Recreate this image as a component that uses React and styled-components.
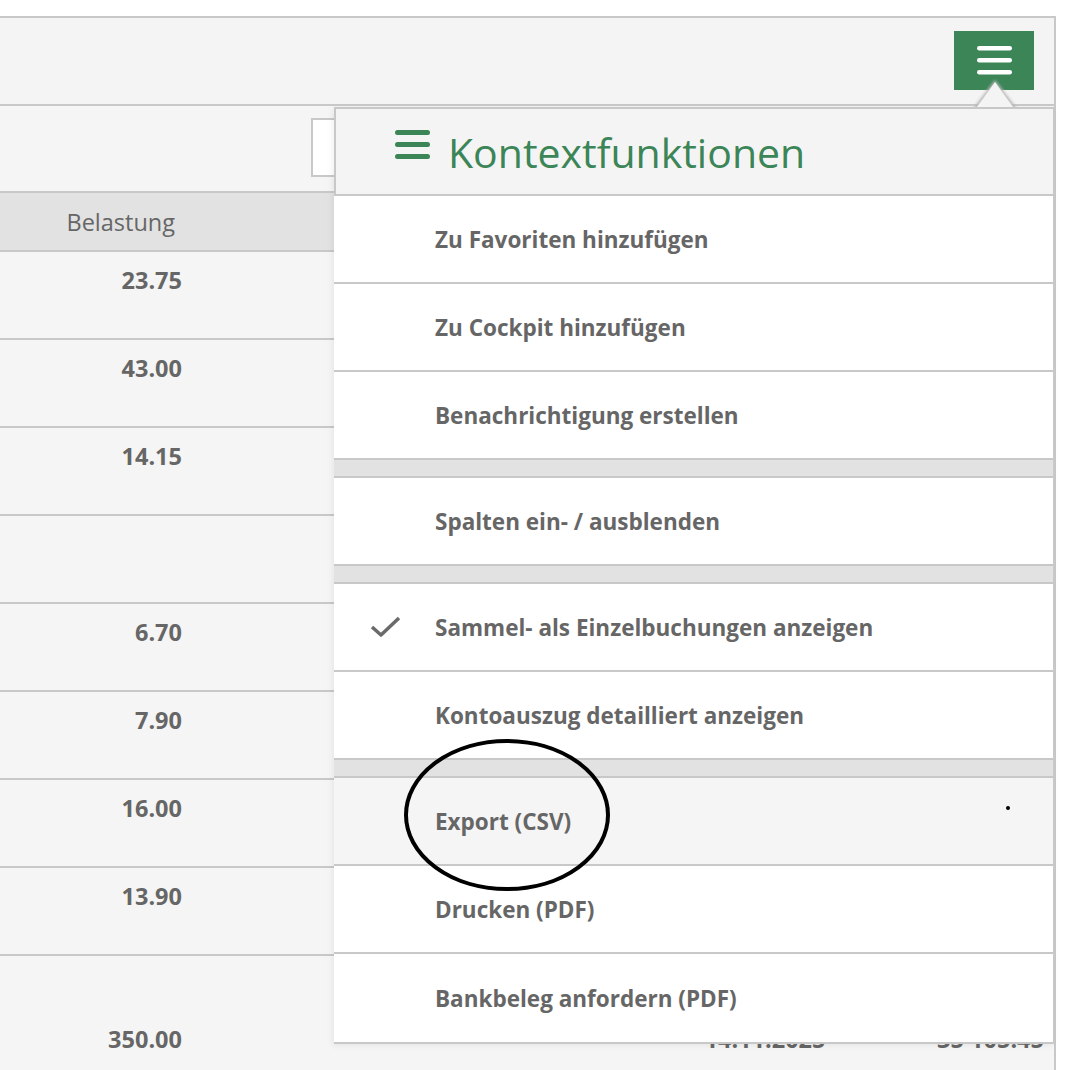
import React from "react";
import styled, { createGlobalStyle } from "styled-components";

const GlobalStyle = createGlobalStyle`
  body {
    margin: 0;
    background: #ffffff;
    font-family: "Open Sans", "Noto Sans", sans-serif;
  }
`;

const GREEN = "#3b8557";
const TEXT = "#666666";
const LINE = "#c8c8c8";

const Page = styled.div`
  position: relative;
  width: 1066px;
  height: 1070px;
  overflow: hidden;
  padding-top: 16px;
  box-sizing: border-box;
`;

const Frame = styled.div`
  width: 1056px;
  box-sizing: border-box;
  border-top: 2px solid ${LINE};
  border-right: 2px solid ${LINE};
  background: #f5f5f5;
`;

const Toolbar = styled.div`
  height: 88px;
  box-sizing: border-box;
  display: flex;
  justify-content: flex-end;
  align-items: flex-start;
  padding: 13px 20px 0 0;
  background: #f4f4f4;
  border-bottom: 2px solid ${LINE};
`;

const MenuButton = styled.button`
  width: 80px;
  height: 59px;
  border: none;
  padding: 0;
  background: ${GREEN};
  display: flex;
  align-items: center;
  justify-content: center;
`;

const FilterBar = styled.div`
  height: 87px;
  box-sizing: border-box;
  padding: 12px 0 0 311px;
  border-bottom: 2px solid ${LINE};
`;

const SearchBox = styled.div`
  width: 200px;
  height: 59px;
  box-sizing: border-box;
  background: #fff;
  border: 2px solid ${LINE};
`;

const Row = styled.div`
  display: grid;
  grid-template-columns: 200px 1fr 150px 214px;
  align-items: ${({ $head }) => ($head ? "center" : "start")};
  height: ${({ $height }) => $height || 88}px;
  box-sizing: border-box;
  padding-top: ${({ $pad }) => $pad || 0}px;
  background: ${({ $head }) => ($head ? "#e2e2e2" : "#f5f5f5")};
  border-bottom: 2px solid ${LINE};
  color: ${TEXT};
  font-size: ${({ $head }) => ($head ? 23.5 : 23.5)}px;
  font-weight: ${({ $head }) => ($head ? 400 : 700)};
  line-height: 28px;
`;

const Cell = styled.div`
  text-align: ${({ $align }) => $align || "right"};
  padding-right: ${({ $pr }) => $pr || 0}px;
`;

const Menu = styled.div`
  position: absolute;
  left: 334px;
  top: 107px;
  width: 721px;
  box-sizing: border-box;
  background: #fff;
  border-right: 2px solid ${LINE};
  border-bottom: 2px solid ${LINE};
  box-shadow: -2px 2px 6px rgba(0, 0, 0, 0.06);
`;

const Pointer = styled.svg`
  position: absolute;
  left: 634px;
  top: -31px;
`;

const MenuHead = styled.div`
  position: relative;
  height: 89px;
  box-sizing: border-box;
  display: flex;
  align-items: flex-start;
  gap: 18px;
  padding: 19px 0 0 59px;
  background: #f4f4f4;
  border: 2px solid ${LINE};
  margin-right: -2px;
`;

const Title = styled.div`
  color: ${GREEN};
  font-size: 41px;
  line-height: 48px;
`;

const Item = styled.div`
  height: 88px;
  box-sizing: border-box;
  display: flex;
  align-items: center;
  padding-left: 36px;
  background: ${({ $hover }) => ($hover ? "#f5f5f5" : "#fff")};
  border-bottom: 2px solid ${LINE};
  color: ${TEXT};
  font-size: 22.5px;
  font-weight: 700;
`;

const CheckSlot = styled.div`
  width: 65px;
  display: flex;
  align-items: center;
`;

const Separator = styled.div`
  height: 18px;
  box-sizing: border-box;
  background: #e2e2e2;
  border-bottom: 2px solid ${LINE};
`;

const Annotation = styled.svg`
  position: absolute;
  left: 0;
  top: 0;
  pointer-events: none;
`;

function Burger({ color, width, gap, thick }) {
  const h = gap * 2 + thick;
  return (
    <svg width={width} height={h} viewBox={`0 0 ${width} ${h}`}>
      {[0, 1, 2].map((i) => (
        <line
          key={i}
          x1={thick / 2}
          x2={width - thick / 2}
          y1={thick / 2 + i * gap}
          y2={thick / 2 + i * gap}
          stroke={color}
          strokeWidth={thick}
          strokeLinecap="round"
        />
      ))}
    </svg>
  );
}

const rows = [
  { value: "23.75" },
  { value: "43.00" },
  { value: "14.15" },
  { value: "" },
  { value: "6.70" },
  { value: "7.90" },
  { value: "16.00" },
  { value: "13.90" },
];

const menu = [
  { label: "Zu Favoriten hinzufügen" },
  { label: "Zu Cockpit hinzufügen" },
  { label: "Benachrichtigung erstellen" },
  { sep: true },
  { label: "Spalten ein- / ausblenden" },
  { sep: true },
  { label: "Sammel- als Einzelbuchungen anzeigen", checked: true },
  { label: "Kontoauszug detailliert anzeigen" },
  { sep: true },
  { label: "Export (CSV)", hover: true },
  { label: "Drucken (PDF)" },
  { label: "Bankbeleg anfordern (PDF)", last: true },
];

export default function App() {
  return (
    <>
      <GlobalStyle />
      <Page>
        <Frame>
          <Toolbar>
            <MenuButton>
              <Burger color="#fff" width={35} gap={12} thick={4.5} />
            </MenuButton>
          </Toolbar>
          <FilterBar>
            <SearchBox />
          </FilterBar>
          <Row $head $height={59}>
            <Cell $pr={25}>Belastung</Cell>
          </Row>
          {rows.map((r, i) => (
            <Row key={i} $pad={14}>
              <Cell $pr={18}>{r.value}</Cell>
            </Row>
          ))}
          <Row $pad={69} $height={120}>
            <Cell $pr={18}>350.00</Cell>
            <Cell />
            <Cell $align="center">14.11.2025</Cell>
            <Cell $pr={10}>35'105.45</Cell>
          </Row>
        </Frame>

        <Menu>
          <Pointer width="54" height="34" viewBox="0 0 54 34">
            <defs>
              <filter id="ps" x="-30%" y="-30%" width="160%" height="160%">
                <feGaussianBlur stdDeviation="1.6" />
              </filter>
            </defs>
            <polygon points="4,34 27,4 50,34" fill="#b8b8b8" filter="url(#ps)" />
            <polygon points="6,35 27,6 48,35" fill="#f4f4f4" />
          </Pointer>
          <MenuHead>
            <div style={{ paddingTop: 2 }}>
              <Burger color={GREEN} width={35} gap={12} thick={5} />
            </div>
            <Title>Kontextfunktionen</Title>
          </MenuHead>
          {menu.map((m, i) =>
            m.sep ? (
              <Separator key={i} />
            ) : (
              <Item key={i} $hover={m.hover} style={m.last ? { borderBottom: "none" } : undefined}>
                <CheckSlot>
                  {m.checked && (
                    <svg width="32" height="24" viewBox="0 0 32 24">
                      <polyline
                        points="2,12 11,20 29,3"
                        fill="none"
                        stroke="#6a6a6a"
                        strokeWidth="3.5"
                        strokeLinejoin="round"
                      />
                    </svg>
                  )}
                </CheckSlot>
                {m.label}
              </Item>
            )
          )}
        </Menu>

        <Annotation width="1066" height="1070">
          <ellipse cx="507" cy="815" rx="101" ry="74" fill="none" stroke="#000" strokeWidth="4" />
          <circle cx="1008" cy="808" r="2" fill="#000" />
        </Annotation>
      </Page>
    </>
  );
}
